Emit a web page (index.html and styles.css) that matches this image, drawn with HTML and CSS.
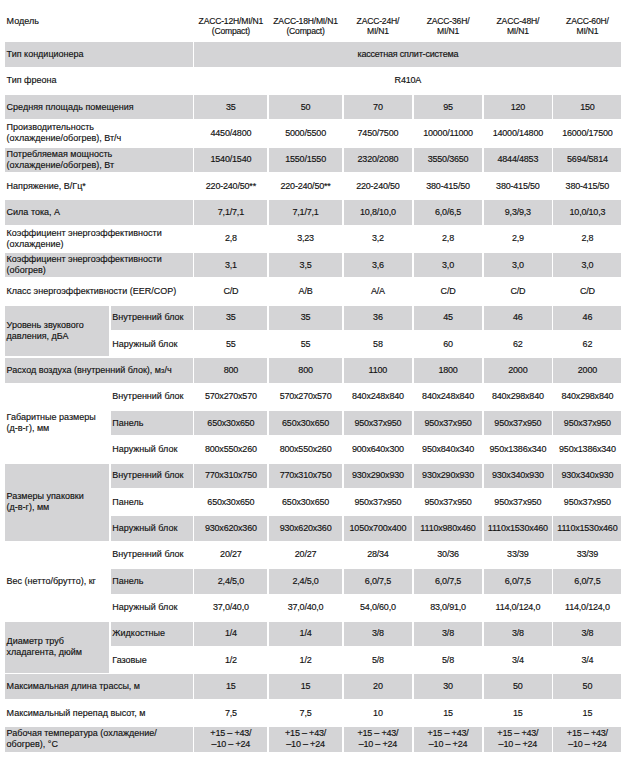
FILE: index.html
```html
<!DOCTYPE html>
<html lang="ru">
<head>
<meta charset="utf-8">
<title>ZACC — технические характеристики</title>
<link rel="stylesheet" href="styles.css">
</head>
<body>
<div class="spec">
  <div class="row head">
    <div class="c lab s2">Модель</div>
    <div class="c">ZACC-12H/MI/N1<br>(Compact)</div>
    <div class="c">ZACC-18H/MI/N1<br>(Compact)</div>
    <div class="c">ZACC-24H/<br>MI/N1</div>
    <div class="c">ZACC-36H/<br>MI/N1</div>
    <div class="c">ZACC-48H/<br>MI/N1</div>
    <div class="c">ZACC-60H/<br>MI/N1</div>
  </div>
  <div class="row g">
    <div class="c lab s2">Тип кондиционера</div>
    <div class="c s6">кассетная сплит-система</div>
  </div>
  <div class="row">
    <div class="c lab s2">Тип фреона</div>
    <div class="c s6">R410A</div>
  </div>
  <div class="row g">
    <div class="c lab s2">Средняя площадь помещения</div>
    <div class="c">35</div><div class="c">50</div><div class="c">70</div><div class="c">95</div><div class="c">120</div><div class="c">150</div>
  </div>
  <div class="row">
    <div class="c lab s2">Производительность<br>(охлаждение/обогрев), Вт/ч</div>
    <div class="c">4450/4800</div><div class="c">5000/5500</div><div class="c">7450/7500</div><div class="c">10000/11000</div><div class="c">14000/14800</div><div class="c">16000/17500</div>
  </div>
  <div class="row g">
    <div class="c lab s2">Потребляемая мощность<br>(охлаждение/обогрев), Вт</div>
    <div class="c">1540/1540</div><div class="c">1550/1550</div><div class="c">2320/2080</div><div class="c">3550/3650</div><div class="c">4844/4853</div><div class="c">5694/5814</div>
  </div>
  <div class="row">
    <div class="c lab s2">Напряжение, В/Гц*</div>
    <div class="c">220-240/50**</div><div class="c">220-240/50**</div><div class="c">220-240/50</div><div class="c">380-415/50</div><div class="c">380-415/50</div><div class="c">380-415/50</div>
  </div>
  <div class="row g">
    <div class="c lab s2">Сила тока, А</div>
    <div class="c">7,1/7,1</div><div class="c">7,1/7,1</div><div class="c">10,8/10,0</div><div class="c">6,0/6,5</div><div class="c">9,3/9,3</div><div class="c">10,0/10,3</div>
  </div>
  <div class="row">
    <div class="c lab s2">Коэффициент энергоэффективности<br>(охлаждение)</div>
    <div class="c">2,8</div><div class="c">3,23</div><div class="c">3,2</div><div class="c">2,8</div><div class="c">2,9</div><div class="c">2,8</div>
  </div>
  <div class="row g">
    <div class="c lab s2">Коэффициент энергоэффективности<br>(обогрев)</div>
    <div class="c">3,1</div><div class="c">3,5</div><div class="c">3,6</div><div class="c">3,0</div><div class="c">3,0</div><div class="c">3,0</div>
  </div>
  <div class="row">
    <div class="c lab s2">Класс энергоэффективности (EER/COP)</div>
    <div class="c">C/D</div><div class="c">A/B</div><div class="c">A/A</div><div class="c">C/D</div><div class="c">C/D</div><div class="c">C/D</div>
  </div>
  <div class="row g">
    <div class="c lab r2">Уровень звукового<br>давления, дБА</div>
    <div class="c lab">Внутренний блок</div>
    <div class="c">35</div><div class="c">35</div><div class="c">36</div><div class="c">45</div><div class="c">46</div><div class="c">46</div>
  </div>
  <div class="row">
    <div class="c lab">Наружный блок</div>
    <div class="c">55</div><div class="c">55</div><div class="c">58</div><div class="c">60</div><div class="c">62</div><div class="c">62</div>
  </div>
  <div class="row g">
    <div class="c lab s2">Расход воздуха (внутренний блок), м<sup>3</sup>/ч</div>
    <div class="c">800</div><div class="c">800</div><div class="c">1100</div><div class="c">1800</div><div class="c">2000</div><div class="c">2000</div>
  </div>
  <div class="row">
    <div class="c lab r3">Габаритные размеры<br>(д-в-г), мм</div>
    <div class="c lab">Внутренний блок</div>
    <div class="c">570x270x570</div><div class="c">570x270x570</div><div class="c">840x248x840</div><div class="c">840x248x840</div><div class="c">840x298x840</div><div class="c">840x298x840</div>
  </div>
  <div class="row g">
    <div class="c lab">Панель</div>
    <div class="c">650x30x650</div><div class="c">650x30x650</div><div class="c">950x37x950</div><div class="c">950x37x950</div><div class="c">950x37x950</div><div class="c">950x37x950</div>
  </div>
  <div class="row">
    <div class="c lab">Наружный блок</div>
    <div class="c">800x550x260</div><div class="c">800x550x260</div><div class="c">900x640x300</div><div class="c">950x840x340</div><div class="c">950x1386x340</div><div class="c">950x1386x340</div>
  </div>
  <div class="row g">
    <div class="c lab r3">Размеры упаковки<br>(д-в-г), мм</div>
    <div class="c lab">Внутренний блок</div>
    <div class="c">770x310x750</div><div class="c">770x310x750</div><div class="c">930x290x930</div><div class="c">930x290x930</div><div class="c">930x340x930</div><div class="c">930x340x930</div>
  </div>
  <div class="row">
    <div class="c lab">Панель</div>
    <div class="c">650x30x650</div><div class="c">650x30x650</div><div class="c">950x37x950</div><div class="c">950x37x950</div><div class="c">950x37x950</div><div class="c">950x37x950</div>
  </div>
  <div class="row g">
    <div class="c lab">Наружный блок</div>
    <div class="c">930x620x360</div><div class="c">930x620x360</div><div class="c">1050x700x400</div><div class="c">1110x980x460</div><div class="c">1110x1530x460</div><div class="c">1110x1530x460</div>
  </div>
  <div class="row">
    <div class="c lab r3">Вес (нетто/брутто), кг</div>
    <div class="c lab">Внутренний блок</div>
    <div class="c">20/27</div><div class="c">20/27</div><div class="c">28/34</div><div class="c">30/36</div><div class="c">33/39</div><div class="c">33/39</div>
  </div>
  <div class="row g">
    <div class="c lab">Панель</div>
    <div class="c">2,4/5,0</div><div class="c">2,4/5,0</div><div class="c">6,0/7,5</div><div class="c">6,0/7,5</div><div class="c">6,0/7,5</div><div class="c">6,0/7,5</div>
  </div>
  <div class="row">
    <div class="c lab">Наружный блок</div>
    <div class="c">37,0/40,0</div><div class="c">37,0/40,0</div><div class="c">54,0/60,0</div><div class="c">83,0/91,0</div><div class="c">114,0/124,0</div><div class="c">114,0/124,0</div>
  </div>
  <div class="row g">
    <div class="c lab r2">Диаметр труб<br>хладагента, дюйм</div>
    <div class="c lab">Жидкостные</div>
    <div class="c">1/4</div><div class="c">1/4</div><div class="c">3/8</div><div class="c">3/8</div><div class="c">3/8</div><div class="c">3/8</div>
  </div>
  <div class="row">
    <div class="c lab">Газовые</div>
    <div class="c">1/2</div><div class="c">1/2</div><div class="c">5/8</div><div class="c">5/8</div><div class="c">3/4</div><div class="c">3/4</div>
  </div>
  <div class="row g">
    <div class="c lab s2">Максимальная длина трассы, м</div>
    <div class="c">15</div><div class="c">15</div><div class="c">20</div><div class="c">30</div><div class="c">50</div><div class="c">50</div>
  </div>
  <div class="row">
    <div class="c lab s2">Максимальный перепад высот, м</div>
    <div class="c">7,5</div><div class="c">7,5</div><div class="c">10</div><div class="c">15</div><div class="c">15</div><div class="c">15</div>
  </div>
  <div class="row g">
    <div class="c lab s2">Рабочая температура (охлаждение/<br>обогрев), °С</div>
    <div class="c">+15 – +43/<br>–10 – +24</div><div class="c">+15 – +43/<br>–10 – +24</div><div class="c">+15 – +43/<br>–10 – +24</div><div class="c">+15 – +43/<br>–10 – +24</div><div class="c">+15 – +43/<br>–10 – +24</div><div class="c">+15 – +43/<br>–10 – +24</div>
  </div>
</div>
</body>
</html>
```

FILE: styles.css
```css
html, body {
  margin: 0;
  padding: 0;
  background: #ffffff;
}

body {
  font-family: "Liberation Sans", Arial, sans-serif;
  font-size: 9px;
  color: #111111;
}

.spec {
  display: grid;
  grid-template-columns: 104px 82px 73px 73px 68.3px 68.6px 67.7px 68px;
  grid-auto-rows: 24.4px;
  column-gap: 1.7px;
  row-gap: 1.96px;
  margin: 15.9px 0 0 5px;
  width: 616.5px;
}

.row {
  display: contents;
}

.c {
  display: flex;
  align-items: center;
  justify-content: center;
  text-align: center;
  line-height: 11px;
  white-space: nowrap;
  letter-spacing: -0.2px;
  -webkit-text-stroke: 0.15px currentColor;
}

.row.g > .c {
  background: #d4d4d6;
}

.lab {
  justify-content: flex-start;
  text-align: left;
  padding-left: 1.6px;
  letter-spacing: 0;
}

.s2 { grid-column: span 2; }
.s6 { grid-column: span 6; }
.r2 { grid-row: span 2; }
.r3 { grid-row: span 3; }

.head > .c {
  align-items: flex-start;
  line-height: 10.4px;
  font-size: 8.6px;
}

.head > .lab {
  font-size: 9px;
}

sup {
  font-size: 6px;
  line-height: 0;
  vertical-align: 3px;
}
```
